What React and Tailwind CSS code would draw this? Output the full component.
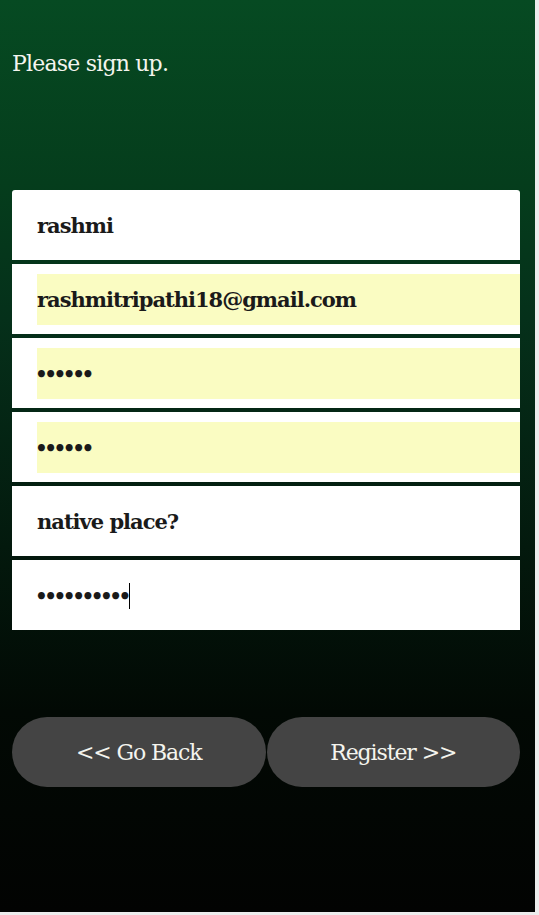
const fields = [
  { text: 'rashmi', filled: false, top: true },
  { text: 'rashmitripathi18@gmail.com', filled: true },
  { text: '••••••', filled: true, dots: true },
  { text: '••••••', filled: true, dots: true },
  { text: 'native place?', filled: false },
  { text: '••••••••••', filled: false, dots: true, caret: true },
];

const serif = "font-['DejaVu_Serif',Georgia,serif]";

const App = () => {
  return (
    <div className="w-[539px] h-[915px] bg-[#ececec]">
      <div className="w-[535px] h-[912px] bg-[linear-gradient(180deg,#064a22_0%,#053d1c_20%,#05301a_35%,#03190d_60%,#020904_78%,#020302_100%)] flex flex-col px-3">
        <h1 className={`${serif} text-[#f4f4ee] text-[22px] pt-[50px] leading-[28px] tracking-[-0.8px]`}>
          Please sign up.
        </h1>

        <div className="mt-[112px] w-[508px] flex flex-col gap-[4px]">
          {fields.map((f, i) => (
            <div
              key={i}
              className={`h-[70px] bg-white pl-[25px] flex items-center ${f.top ? 'rounded-t-[3px]' : ''}`}
            >
              <div
                className={`${serif} h-[51px] w-full flex items-center pt-[2px] font-bold text-[#1a1a1a] ${f.filled ? 'bg-[#fafcc2]' : ''} ${f.dots ? 'text-[20px] tracking-[-3.5px]' : 'text-[21px] tracking-[-1px]'}`}
              >
                <span className={f.dots ? '-ml-[2px]' : ''}>{f.text}</span>
                {f.caret && <span className="inline-block w-px h-[26px] bg-black ml-[1px]" />}
              </div>
            </div>
          ))}
        </div>

        <div className="mt-[87px] w-[508px] flex gap-[1px]">
          <button className={`${serif} flex-1 h-[70px] rounded-full bg-[#444444] text-[#f4f4ee] text-[22px] tracking-[-1.1px]`}>
            &lt;&lt; Go Back
          </button>
          <button className={`${serif} flex-1 h-[70px] rounded-full bg-[#444444] text-[#f4f4ee] text-[22px] tracking-[-1.1px]`}>
            Register &gt;&gt;
          </button>
        </div>
      </div>
    </div>
  );
};

export default App;
